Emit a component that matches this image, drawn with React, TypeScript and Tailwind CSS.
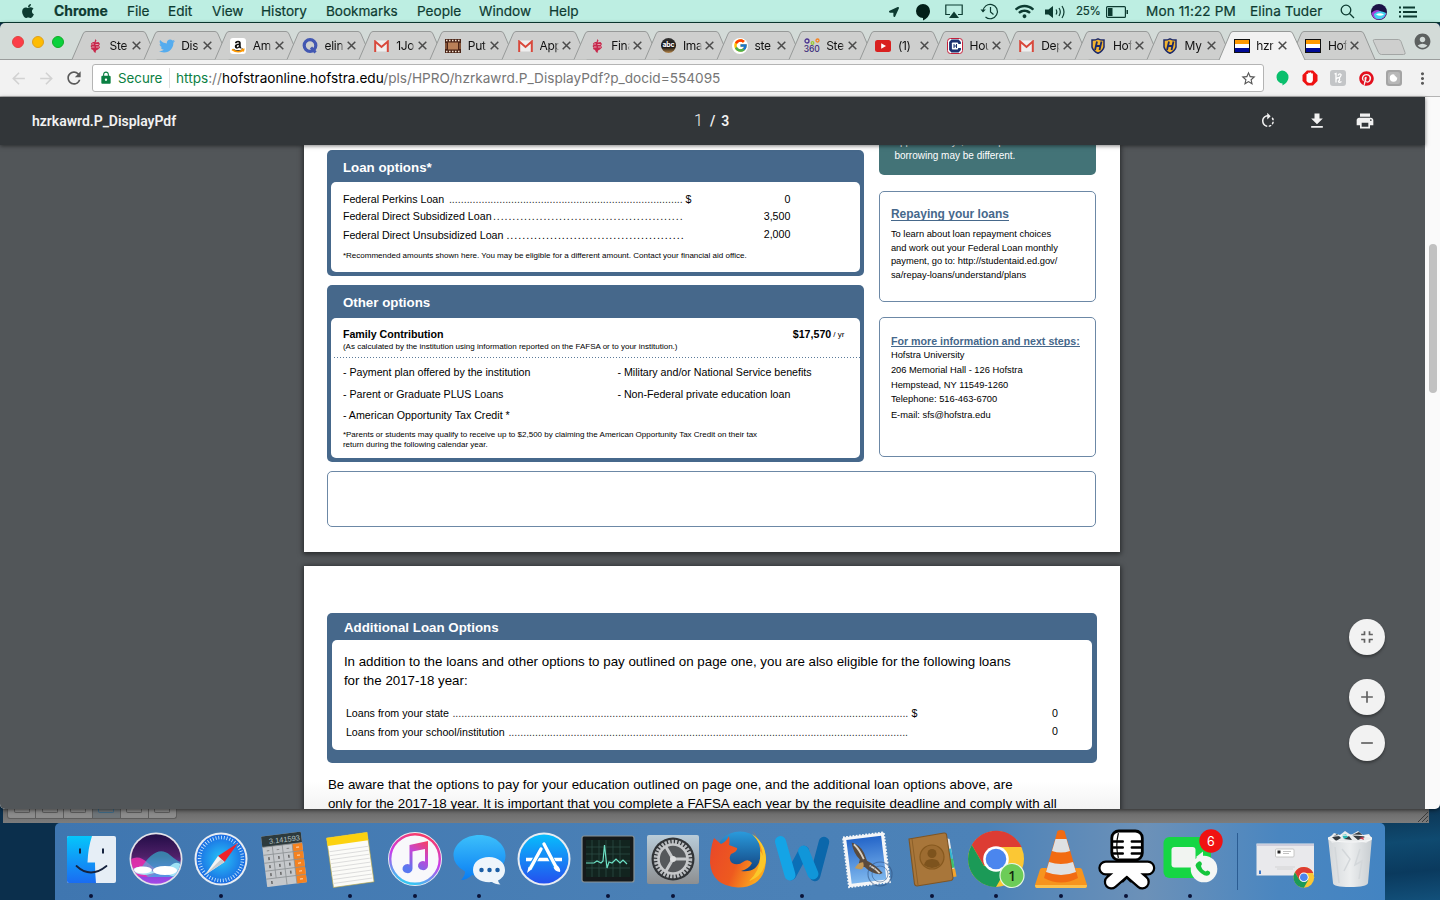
import type { ReactNode } from "react";
import { FaAmazon, FaApple, FaLocationArrow, FaPinterest, FaTwitter, FaWifi } from "react-icons/fa";
import { FcGoogle } from "react-icons/fc";
import {
  MdAccountCircle,
  MdAdd,
  MdArrowBack,
  MdArrowForward,
  MdFileDownload,
  MdFullscreenExit,
  MdLock,
  MdMoreVert,
  MdPrint,
  MdRefresh,
  MdRemove,
  MdRotateRight,
  MdStarBorder,
} from "react-icons/md";

/* ---------- menu bar ---------- */

function MenuBar() {
  return (
    <div className="flex h-[23px] shrink-0 items-center border-b border-[#0c3f35] bg-[#bdeee2] pt-px text-[13.6px] leading-none text-[#0d3b31] [-webkit-text-stroke:0.2px_#0d3b31]">
      <span className="flex w-[54px] pl-5">
        <FaApple size={16} className="-mt-0.5" />
      </span>
      <span className="w-[73px] text-[13.9px] font-bold">Chrome</span>
      <span className="w-[41px]">File</span>
      <span className="w-[44px]">Edit</span>
      <span className="w-[49px]">View</span>
      <span className="w-[65px]">History</span>
      <span className="w-[91px] tracking-[-0.05px]">Bookmarks</span>
      <span className="w-[62px]">People</span>
      <span className="w-[70px]">Window</span>
      <span className="grow">Help</span>
      <span className="flex w-[28px] justify-center">
        <FaLocationArrow size={10} />
      </span>
      <span className="flex w-[30px] justify-center">
        <svg width="16" height="18" viewBox="0 0 16 18" fill="#032019">
          <path d="M8 1a7 7 0 0 1 7 7c0 4.500-3.500 8-7 9.500V15A7 7 0 0 1 8 1z" />
        </svg>
      </span>
      <span className="flex w-[32px] justify-center">
        <svg width="18" height="15" viewBox="0 0 18 15">
          <path d="M5 10.500H.8V1h16.400v9.500H13" fill="none" stroke="#0d3b31" strokeWidth="1.200" />
          <path d="M9 7.500l5 6.500H4z" fill="#0d3b31" />
        </svg>
      </span>
      <span className="flex w-[38px] justify-center">
        <svg width="19" height="17" viewBox="0 0 19 17" fill="none" stroke="#0d3b31" strokeWidth="1.200">
          <path d="M3 8.500a7.200 7.200 0 1 1 2.500 5.500" />
          <path d="M10.500 4v5l3 2.500" />
          <path d="M.5 6.500L3 9.500l2.800-3z" fill="#0d3b31" stroke="none" />
        </svg>
      </span>
      <span className="flex w-[32px] justify-center">
        <FaWifi size={19} />
      </span>
      <span className="flex w-[30px] justify-center">
        <svg width="21" height="14" viewBox="0 0 21 14" fill="none" stroke="#0d3b31" strokeWidth="1.200">
          <path d="M0 4.500h3.500L8 1v12L3.500 9.500H0z" fill="#0d3b31" stroke="none" />
          <path d="M11 4.500q1.600 2.500 0 5M14 3q2.600 4 0 8M17 1q4 6 0 12" />
        </svg>
      </span>
      <span className="w-[33px] pl-[6px] text-[11.500px] tracking-[-0.3px]">25%</span>
      <span className="flex w-[28px] justify-center">
        <svg width="23" height="12" viewBox="0 0 23 12">
          <rect x=".6" y=".6" width="18.800" height="10.800" rx="1" fill="none" stroke="#0d3b31" strokeWidth="1.200" />
          <rect x="2" y="2" width="4.500" height="8" fill="#0d3b31" />
          <path d="M20.500 4h1.500v4h-1.500z" fill="#0d3b31" />
        </svg>
      </span>
      <span className="w-[119px] whitespace-nowrap pl-[15px] tracking-[0.1px]">Mon 11:22 PM</span>
      <span className="w-[80px] whitespace-nowrap tracking-[0.1px]">Elina Tuder</span>
      <span className="flex w-[34px] justify-center">
        <svg width="15" height="15" viewBox="0 0 15 15" fill="none" stroke="#0d3b31" strokeWidth="1.300">
          <circle cx="6" cy="6" r="4.800" />
          <path d="M9.500 9.500L14 14" />
        </svg>
      </span>
      <span className="flex w-[30px] justify-center">
        <svg width="16" height="16" viewBox="0 0 16 16">
          <circle cx="8" cy="8" r="8" fill="#1b1246" />
          <path d="M.5 9Q5 4 9 7t6.500 2Q14 15 8 15.500T.5 9z" fill="#a03fd8" />
          <path d="M3 10q5-5 12-1-2 6-7 6t-5-5z" fill="#3fd5ee" />
          <path d="M5 10.500q4-2.500 8 0-4 2.500-8 0z" fill="#fff" />
        </svg>
      </span>
      <span className="mr-[18px] flex w-[28px] justify-center">
        <svg width="18" height="12" viewBox="0 0 18 12" stroke="#0d3b31" strokeWidth="1.800">
          <path d="M4 1.500h12M4 6h14M4 10.500h14M0 1.500h2M0 6h2M0 10.500h2" />
        </svg>
      </span>
    </div>
  );
}

/* ---------- tab favicons ---------- */

function CrestIcon() {
  return (
    <svg width="16" height="16" viewBox="0 0 16 16">
      <path d="M8.500 1l1 1.500L8.500 4.500l3-.5 1.500 2-1 1.500 1 2-2 2-2 1L8.500 15 7 14l-1-2-2-1 .5-1.500L3.500 8l1-1-.5-1.500 2-1.500h1.500z" fill="#c8284c" />
      <path d="M5 6h2M8.500 6.500h3M5 9h2.500M9 9h3" stroke="#e9c3cc" strokeWidth=".8" />
    </svg>
  );
}

function GmailIcon() {
  return (
    <svg width="15" height="12" viewBox="0 0 15 12">
      <rect x="1" y=".5" width="13" height="11" fill="#eee" />
      <path d="M1.200 12V1.500L7.500 7l6.300-5.500V12" fill="none" stroke="#d9483b" strokeWidth="2" />
    </svg>
  );
}

function ShieldIcon() {
  return (
    <svg width="14" height="16" viewBox="0 0 14 16">
      <path d="M1 2q3 .3 6-1.200Q10 2.300 13 2v7q-1 4-6 6.300Q2 13 1 9z" fill="#f2b430" stroke="#1c2a6b" strokeWidth="1.500" />
      <path d="M6 3.500L4 12M10.500 3.500L8.500 12M4.500 8H10" stroke="#1c2a6b" strokeWidth="1.800" />
    </svg>
  );
}

function FlagIcon() {
  return (
    <svg width="16" height="14" viewBox="0 0 16 14">
      <rect width="16" height="14" fill="#111" />
      <path d="M1 1h14v4H1z" fill="#f90" />
      <path d="M1 5h14v4H1z" fill="#fff" />
      <path d="M1 9h14v4H1z" fill="#000a96" />
    </svg>
  );
}

function AmazonIcon() {
  return (
    <span className="relative flex size-4 items-center justify-center rounded-[3px] bg-white">
      <FaAmazon size={12} color="#111" />
      <svg className="absolute left-0 top-0" width="16" height="16" viewBox="0 0 16 16">
        <path d="M2 11.500q5.500 4 11 .8M11.500 11.500l2.200-.2-.5 2.200" fill="none" stroke="#f90" strokeWidth="1.600" />
      </svg>
    </span>
  );
}

function QIcon() {
  return (
    <svg width="16" height="16" viewBox="0 0 16 16" fill="none" stroke="#4257b2">
      <circle cx="8" cy="7.500" r="5.800" strokeWidth="3.200" />
      <path d="M9 9.500l4.500 5" strokeWidth="3" />
    </svg>
  );
}

function FilmIcon() {
  return (
    <svg width="16" height="14" viewBox="0 0 16 14">
      <rect width="16" height="14" fill="#4a2417" />
      <rect x="3" y="3.500" width="10" height="7" fill="#b98058" />
      <path d="M1 1.500h14M1 12.500h14" stroke="#f3e3d3" strokeWidth="1.300" strokeDasharray="1.500 1.500" />
      <path d="M1 4v6M15 4v6" stroke="#b98058" />
    </svg>
  );
}

function AbcIcon() {
  return (
    <span className="flex size-[15px] items-center justify-center rounded-full bg-[linear-gradient(#333,#111_60%,#b9884a)] pb-[2px] text-[7px] font-bold leading-none tracking-[-0.3px] text-white">
      abc
    </span>
  );
}

function GoogleIcon() {
  return (
    <span className="flex size-4 items-center justify-center rounded-full bg-white">
      <FcGoogle size={15} />
    </span>
  );
}

function Icon360() {
  return (
    <span className="flex w-4 flex-col items-center">
      <svg width="16" height="7" viewBox="0 0 16 7" fill="none" strokeWidth="1.300">
        <circle cx="3" cy="3" r="2" stroke="#4a3190" />
        <circle cx="8.500" cy="5" r="1.300" stroke="#9ccc3c" />
        <circle cx="13.500" cy="2.500" r="1.500" stroke="#f58220" />
      </svg>
      <span className="text-[8.500px] font-medium leading-[9px] text-[#3a2a7a]">360</span>
    </span>
  );
}

function YoutubeIcon() {
  return (
    <svg width="16" height="12" viewBox="0 0 16 12">
      <rect width="16" height="12" rx="2.500" fill="#d9201f" />
      <path d="M6.200 3.200v5.600L11 6z" fill="#fff" />
    </svg>
  );
}

function CIcon() {
  return (
    <svg width="16" height="16" viewBox="0 0 16 16">
      <rect x=".5" y=".5" width="15" height="15" rx="3" fill="#fff" stroke="#c4203a" />
      <path d="M12.500 6V4.500L11 3H5L3.500 4.500v7L5 13h6l1.500-1.500V10" fill="none" stroke="#1f3270" strokeWidth="2.800" />
      <path d="M7 6v4M9.500 6v4M7 8h2.500" stroke="#1f3270" strokeWidth="1" />
    </svg>
  );
}

const tabs: { label: string; icon: ReactNode; active?: boolean }[] = [
  { label: "Ste", icon: <CrestIcon /> },
  { label: "Dis", icon: <FaTwitter size={16} color="#55acee" /> },
  { label: "Am", icon: <AmazonIcon /> },
  { label: "elin", icon: <QIcon /> },
  { label: "1Jo", icon: <GmailIcon /> },
  { label: "Put", icon: <FilmIcon /> },
  { label: "App", icon: <GmailIcon /> },
  { label: "Fina", icon: <CrestIcon /> },
  { label: "Ima", icon: <AbcIcon /> },
  { label: "ste", icon: <GoogleIcon /> },
  { label: "Ste", icon: <Icon360 /> },
  { label: "(1)", icon: <YoutubeIcon /> },
  { label: "Hou", icon: <CIcon /> },
  { label: "Dep", icon: <GmailIcon /> },
  { label: "Hof", icon: <ShieldIcon /> },
  { label: "My", icon: <ShieldIcon /> },
  { label: "hzr", icon: <FlagIcon />, active: true },
  { label: "Hof", icon: <FlagIcon /> },
];

function TabStrip() {
  return (
    <div className="flex h-[37px] shrink-0 items-end border-b border-[#9a9d9c] bg-[#d3dbd8]">
      <div className="flex w-[72px] shrink-0 gap-2 self-start pl-3 pt-[13px]">
        <span className="size-3 rounded-full border border-[#e0443e] bg-[#fc3d48]" />
        <span className="size-3 rounded-full border border-[#dfa01c] bg-[#fdbc02]" />
        <span className="size-3 rounded-full border border-[#12ac28] bg-[#0ad13c]" />
      </div>
      {tabs.map((t, i) => (
        <div key={i} className={`relative flex h-[28px] w-[71.68px] shrink-0 items-center ${t.active ? "z-10 -mb-px h-[29px] pb-px" : ""}`}>
          <svg className="absolute left-0 top-0 overflow-visible" width="86" height={t.active ? 29 : 28}>
            <path
              d={t.active ? "M0 29L11 3Q12 .5 14 .5H71Q73 .5 74 3L86 29" : "M0 28.500L11 3Q12 .5 14 .5H71Q73 .5 74 3L85 28.500"}
              fill={t.active ? "#f2f2f2" : "#cecfce"}
              stroke="#979a99"
            />
          </svg>
          <span className="relative ml-[15px] flex w-4 justify-center pt-px">{t.icon}</span>
          <span className="relative ml-[6.500px] w-[19px] overflow-hidden whitespace-nowrap pt-px text-[12px] leading-4 tracking-[-0.3px] text-[#111] [mask-image:linear-gradient(90deg,#000_80%,transparent)]">
            {t.label}
          </span>
          <svg className="relative ml-[3px] mt-px" width="9" height="9" viewBox="0 0 9 9" stroke="#4b4b4b" strokeWidth="1.500">
            <path d="M.7.7l7.600 7.600M8.300.7L.7 8.300" />
          </svg>
        </div>
      ))}
      <svg className="mb-[4px] ml-[10px]" width="34" height="16" viewBox="0 0 34 16">
        <path d="M2.500.5h24q1.500 0 2.500 2l4 11q.8 2-1.500 2h-22q-2 0-3-2l-5-11q-1-2 1-2z" fill="#cecfce" stroke="#a3a6a5" />
      </svg>
      <MdAccountCircle className="mb-[8px] ml-[7px]" size={19} color="#5d6160" />
    </div>
  );
}

/* ---------- address bar ---------- */

function AddressBar() {
  return (
    <div className="flex h-[37px] shrink-0 items-center border-b border-[#b4b4b4] bg-[#f2f2f2]">
      <div className="flex w-[92px] shrink-0 items-center pl-[9px]">
        <MdArrowBack size={19} color="#d2d2d2" />
        <MdArrowForward className="ml-[9px]" size={19} color="#d2d2d2" />
        <MdRefresh className="ml-[8px]" size={20} color="#5a5a5a" />
      </div>
      <div className="flex h-[28px] w-[1172px] shrink-0 items-center rounded-[3px] border border-[#b4b4b4] bg-white">
        <MdLock className="ml-[6px]" size={14} color="#0b8043" />
        <span className="ml-[5px] w-[45px] text-[13.300px] leading-4 text-[#0b8043]">Secure</span>
        <span className="ml-[6px] mr-[6px] h-5 w-px bg-[#dedede]" />
        <span className="whitespace-nowrap text-[13.640px] leading-4 text-[#767676]">
          <span className="text-[#0b8043]">https</span>://<span className="text-black">hofstraonline.hofstra.edu</span>
          /pls/HPRO/hzrkawrd.P_DisplayPdf?p_docid=554095
        </span>
        <MdStarBorder className="ml-auto mr-[6px]" size={17} color="#5a5a5a" />
      </div>
      <div className="ml-1 flex shrink-0">
        <span className="flex w-7 items-center justify-center">
          <svg width="14" height="16" viewBox="0 0 14 16">
            <path d="M7 .5a6.500 6.500 0 0 1 6.500 6.500c0 4-3 7-6 8.500v-2.100A6.500 6.500 0 0 1 7 .5z" fill="#0abf6d" />
          </svg>
        </span>
        <span className="flex w-7 items-center justify-center">
          <svg width="16" height="16" viewBox="0 0 16 16">
            <path d="M5 .5h6l4.500 4.500v6L11 15.500H5L.5 11V5z" fill="#ee1111" />
            <path d="M4.500 8V4.500a.8.8 0 0 1 1.600 0V3.300a.8.800 0 0 1 1.600 0V3a.8.8 0 0 1 1.600 0v1a.8.8 0 0 1 1.600 0v6.500q-.5 2.500-3 2.500T4.500 11z" fill="#fff" />
          </svg>
        </span>
        <span className="flex w-7 items-center justify-center">
          <span className="flex size-4 items-center justify-center rounded-[3px] bg-[#c3c5c7]">
            <svg width="10" height="12" viewBox="0 0 10 12" fill="none" stroke="#fff" strokeWidth="1.300">
              <path d="M1.500 2L3 1.500v9M3 7.500Q4.500 5 6 6t-.5 3.500q.5 1.800 3 0M5 3.500Q6 1.500 7.500 2T7 5l-1 1" />
            </svg>
          </span>
        </span>
        <span className="flex w-7 items-center justify-center">
          <FaPinterest size={15} color="#e3101e" />
        </span>
        <span className="flex w-7 items-center justify-center">
          <svg width="16" height="16" viewBox="0 0 16 16">
            <rect width="16" height="16" rx="3" fill="#a4a4a4" />
            <rect x="2" y="2" width="12" height="12" rx="2" fill="#b8b8b8" />
            <circle cx="7.500" cy="8" r="3.700" fill="#fff" />
            <path d="M7.500 4.300h3.700V8z" fill="#b8b8b8" />
          </svg>
        </span>
        <span className="flex w-7 items-center justify-center">
          <MdMoreVert size={19} color="#5a5a5a" />
        </span>
      </div>
    </div>
  );
}

/* ---------- PDF document ---------- */

function Line({ className, children }: { className: string; children: ReactNode }) {
  return <div className={`flex items-center whitespace-nowrap leading-none ${className}`}>{children}</div>;
}

function Leader({ count, className }: { count: number; className: string }) {
  return <span className={`whitespace-nowrap ${className}`}>{".".repeat(count)}</span>;
}

function LoanCard() {
  return (
    <section className="h-[126px] rounded-[5px] bg-[#46688b] px-[4px]">
      <Line className="h-[32px] pl-[11.500px] pt-[3px] text-[13.330px] font-bold text-white">Loan options*</Line>
      <div className="h-[90px] rounded-[5px] bg-white pl-[11.500px] pt-[9px] text-[10.670px]">
        <Line className="h-[17px]">
          <span className="w-[106px]">Federal Perkins Loan</span>
          <Leader count={79} className="w-[235px] text-[#333]" />
          <span className="ml-[1.500px]">$</span>
          <span className="ml-auto mr-[70px]">0</span>
        </Line>
        <Line className="h-[17px]">
          <span className="w-[150px]">Federal Direct Subsidized Loan</span>
          <Leader count={49} className="w-[191px] tracking-[0.93px] text-[#222]" />
          <span className="ml-auto mr-[70px]">3,500</span>
        </Line>
        <Line className="h-[21px]">
          <span className="w-[163.500px]">Federal Direct Unsubsidized Loan</span>
          <Leader count={45} className="w-[179px] tracking-[1px]" />
          <span className="ml-auto mr-[70px] pb-[2px]">2,000</span>
        </Line>
        <Line className="h-[21px] text-[8.030px]">
          *Recommended amounts shown here. You may be eligible for a different amount. Contact your financial aid office.
        </Line>
      </div>
    </section>
  );
}

function OtherOptionsCard() {
  return (
    <section className="mt-[9px] h-[177px] rounded-[5px] bg-[#46688b] px-[4px]">
      <Line className="h-[33px] pl-[11.500px] pt-[3px] text-[13.330px] font-bold text-white">Other options</Line>
      <div className="h-[140px] rounded-[5px] bg-white pt-[8px] text-[10.670px]">
        <Line className="h-[17px] pl-[11.500px] font-bold">
          Family Contribution
          <span className="ml-auto">$17,570</span>
          <span className="ml-[2px] mr-[16px] text-[8px] font-normal">/ yr</span>
        </Line>
        <Line className="h-[9px] pl-[11.500px] text-[8.030px]">
          (As calculated by the institution using information reported on the FAFSA or to your institution.)
        </Line>
        <div className="ml-[3px] mt-[5px] h-px bg-[repeating-linear-gradient(90deg,#5b7a99_0_1px,transparent_1px_3px)]" />
        <div className="flex pl-[11.500px]">
          <div className="w-[274.500px]">
            <Line className="h-[29px]">- Payment plan offered by the institution</Line>
            <Line className="h-[15px]">- Parent or Graduate PLUS Loans</Line>
            <Line className="h-[27px]">- American Opportunity Tax Credit *</Line>
          </div>
          <div>
            <Line className="h-[29px]">- Military and/or National Service benefits</Line>
            <Line className="h-[15px]">- Non-Federal private education loan</Line>
          </div>
        </div>
        <Line className="h-[12px] pl-[11.500px] text-[8.030px]">
          *Parents or students may qualify to receive up to $2,500 by claiming the American Opportunity Tax Credit on their tax
        </Line>
        <Line className="h-[9px] pl-[11.500px] text-[8.030px]">return during the following calendar year.</Line>
      </div>
    </section>
  );
}

function PageOne() {
  return (
    <article className="h-[407px] w-[816px] shrink-0 bg-white pl-[23.400px] text-black shadow-[0_1px_5px_1px_rgba(0,0,0,0.55)]">
      <div className="flex">
        <div className="w-[537px] pt-[5px]">
          <LoanCard />
          <OtherOptionsCard />
        </div>
        <div className="ml-[15px] w-[217px]">
          <div className="h-[30px] overflow-hidden rounded-b-[5px] bg-[#437377] pl-[15px] text-[10px] text-white">
            <Line className="-mt-[10px] h-[13px]">approximately $264.94 per month. Your</Line>
            <Line className="mt-px h-[13px]">borrowing may be different.</Line>
          </div>
          <div className="mt-[16px] h-[111px] rounded-[5px] border border-[#6c88a6] pl-[10.500px] pt-[12px] text-[9.330px]">
            <Line className="h-[21px] text-[12px] font-bold text-[#46688b]">
              <span className="border-b border-[#46688b]">Repaying your loans</span>
            </Line>
            <Line className="mt-px h-[18px]">To learn about loan repayment choices</Line>
            <Line className="h-[9px]">and work out your Federal Loan monthly</Line>
            <Line className="h-[17px]">payment, go to: http://studentaid.ed.gov/</Line>
            <Line className="h-[11px]">sa/repay-loans/understand/plans</Line>
          </div>
          <div className="mt-[15px] h-[140px] rounded-[5px] border border-[#6c88a6] pl-[10.500px] pt-[16px] text-[9.330px]">
            <Line className="h-[15px] text-[10.670px] font-bold text-[#46688b]">
              <span className="border-b border-[#46688b]">For more information and next steps:</span>
            </Line>
            <Line className="h-[14px]">Hofstra University</Line>
            <Line className="h-[16px]">206 Memorial Hall - 126 Hofstra</Line>
            <Line className="h-[13px]">Hempstead, NY 11549-1260</Line>
            <Line className="h-[16px]">Telephone: 516-463-6700</Line>
            <Line className="h-[15px]">E-mail: sfs@hofstra.edu</Line>
          </div>
        </div>
      </div>
      <div className="mt-[9px] h-[56px] w-[769px] rounded-[5px] border border-[#6c88a6]" />
    </article>
  );
}

function PageTwo() {
  return (
    <article className="mt-[14px] h-[300px] w-[816px] shrink-0 bg-white bg-[linear-gradient(#fff_215px,#f3f3f3_243px)] pl-[23.400px] pt-[47px] text-black shadow-[0_1px_5px_1px_rgba(0,0,0,0.55)]">
      <section className="h-[149.500px] w-[769.500px] rounded-[5px] bg-[#46688b] px-[5px]">
        <Line className="h-[27px] pl-[11.500px] pt-[2px] text-[13.330px] font-bold text-white">Additional Loan Options</Line>
        <div className="h-[109.500px] rounded-[5px] bg-white pl-[11.500px] pt-[11.500px] text-[13.330px]">
          <Line className="h-[20px]">
            In addition to the loans and other options to pay outlined on page one, you are also eligible for the following loans
          </Line>
          <Line className="h-[19px]">for the 2017-18 year:</Line>
          <Line className="mt-[14px] h-[18px] pl-[2px] text-[10.670px]">
            <span className="w-[106.500px]">Loans from your state</span>
            <Leader count={154} className="w-[458px] text-[#333]" />
            <span className="ml-px">$</span>
            <span className="ml-auto mr-[34px]">0</span>
          </Line>
          <Line className="h-[19px] pl-[2px] text-[10.670px]">
            <span className="w-[162.500px]">Loans from your school/institution</span>
            <Leader count={135} className="w-[402px] text-[#333]" />
            <span className="ml-auto mr-[34px] pb-[2px]">0</span>
          </Line>
        </div>
      </section>
      <div className="pl-[0.500px] pt-[12px] text-[13.330px]">
        <Line className="h-[20px]">
          Be aware that the options to pay for your education outlined on page one, and the additional loan options above, are
        </Line>
        <Line className="h-[19px] tracking-[0.016px]">
          only for the 2017-18 year. It is important that you complete a FAFSA each year by the requisite deadline and comply with all
        </Line>
      </div>
    </article>
  );
}

function RoundButton({ className, children }: { className: string; children: ReactNode }) {
  return (
    <button className={`flex size-9 items-center justify-center rounded-full bg-[#f2f2f2] text-[#616161] shadow-[0_2px_3px_rgba(0,0,0,0.35)] ${className}`}>
      {children}
    </button>
  );
}

function PdfViewer() {
  return (
    <div className="flex h-[712px] shrink-0 bg-[#fafafa]">
      <div className="relative flex w-[1425px] flex-col bg-[#525659]">
        <header className="z-10 flex h-12 shrink-0 items-center bg-[#323639] font-['Roboto',sans-serif] text-sm leading-none text-[#f1f1f1] shadow-[0_1px_4px_rgba(0,0,0,0.5)]">
          <span className="w-[662px] pl-8 font-semibold tracking-[-0.03px]">hzrkawrd.P_DisplayPdf</span>
          <span className="w-[41px] pb-px pl-[32px] text-base font-light">1</span>
          <span className="w-[553px] pl-[7px] font-semibold tracking-[1.200px]">/ 3</span>
          <MdRotateRight size={18} className="ml-[3px]" />
          <MdFileDownload size={20} className="ml-[30px]" />
          <MdPrint size={20} className="ml-[28px]" />
        </header>
        <main className="flex grow flex-col overflow-hidden pl-[304px] font-['Liberation_Sans',sans-serif]">
          <PageOne />
          <PageTwo />
        </main>
        <div className="absolute left-[1349px] top-[522px] flex flex-col">
          <RoundButton className="">
            <MdFullscreenExit size={20} />
          </RoundButton>
          <RoundButton className="mt-[24px]">
            <MdAdd size={20} />
          </RoundButton>
          <RoundButton className="mt-[10px]">
            <MdRemove size={20} />
          </RoundButton>
        </div>
      </div>
      <div className="ml-[4px] mt-[147px] h-[149px] w-[8px] rounded-full bg-[#c1c1c1]" />
    </div>
  );
}

/* ---------- dock ---------- */

function DockSvg({ children }: { children: ReactNode }) {
  return (
    <svg className="overflow-visible" width="56" height="56" viewBox="0 0 56 56">
      {children}
    </svg>
  );
}

function Finder() {
  return (
    <DockSvg>
      <rect x="4" y="5" width="49" height="47" rx="2" fill="#e6eef6" />
      <path d="M6 5h23q-4 12-4.500 26.500h7.500Q32 43 33 52H6q-2 0-2-2V7q0-2 2-2z" fill="url(#finder)" />
      <path d="M17 17.500v5M40 17.500v5" stroke="#15233f" strokeWidth="2" />
      <path d="M13.500 35q14 13 30 0" fill="none" stroke="#15233f" strokeWidth="1.800" strokeLinecap="round" />
    </DockSvg>
  );
}

function Siri() {
  return (
    <DockSvg>
      <circle cx="28" cy="28" r="26.500" fill="#e3e3ea" />
      <clipPath id="siriClip">
        <circle cx="28" cy="28" r="24.800" />
      </clipPath>
      <g clipPath="url(#siriClip)">
        <rect width="56" height="56" fill="url(#siriBg)" />
        <path d="M0 30Q10 22 20 32T38 38L20 46 0 44z" fill="#f02fae" opacity=".85" />
        <path d="M12 39Q28 12 42 24T56 28V46H20z" fill="#2fd3e6" opacity=".55" />
        <path d="M3 39q10-7 19 0t19-3 15 3q-6 9-15 5t-19-1-19-4z" fill="#a9ecfa" opacity=".9" />
        <ellipse cx="15" cy="39" rx="9" ry="3.500" fill="#fff" />
        <ellipse cx="37" cy="39.500" rx="12" ry="4.500" fill="#fff" />
      </g>
    </DockSvg>
  );
}

function Safari() {
  return (
    <DockSvg>
      <circle cx="28" cy="28" r="26.500" fill="#e9edf2" />
      <circle cx="28" cy="28" r="24.500" fill="url(#safari)" />
      <circle cx="28" cy="28" r="21.500" fill="none" stroke="#d7efff" strokeWidth="3.500" strokeDasharray=".8 2" />
      <path d="M45 12L31.500 31 25 25z" fill="#f0222b" />
      <path d="M12 44l13-19 6.500 6z" fill="#f3f3f3" />
      <path d="M12 44l19.500-13-3.200-3z" fill="#c9ccd0" />
    </DockSvg>
  );
}

function Calculator() {
  return (
    <DockSvg>
      <g transform="translate(4 5.500) rotate(-7)">
        <rect width="40" height="51" rx="1" fill="#c5c8cb" />
        <rect width="40" height="11" rx="1" fill="#2d3a3d" />
        <rect x="30" y="11" width="10" height="40" fill="#f58220" />
        <path d="M0 11h40M0 19h40M0 27h40M0 35h40M0 43h40M10 11v32M20 11v40M30 11v40" stroke="#8d9194" strokeWidth=".8" />
        <text x="38.500" y="8.500" fontSize="7.500" textAnchor="end" fill="#b5c3c4" fontFamily="Liberation Sans, sans-serif">
          3.141593
        </text>
        <path d="M4.500 23h1.500M14.500 23h1.500M24.500 23h1.500M4.500 31h1.500M14.500 31h1.500M24.500 31h1.500M4.500 39h1.500M14.500 39h1.500M24.500 39h1.500M4.500 47h1.500" stroke="#666" strokeWidth="3" />
        <path d="M4 15h2.500M14 15h2.500M24 15h2.500" stroke="#888" />
        <path d="M33.500 15h3M33.500 23h3M33.500 31h3M33.500 39h3M33.500 47h3" stroke="#ffe0c0" />
      </g>
    </DockSvg>
  );
}

function Notes() {
  return (
    <DockSvg>
      <g transform="translate(4.500 7) rotate(-8)">
        <rect width="41" height="50" fill="#fbfbf8" stroke="#b9a741" strokeWidth=".6" />
        <rect width="41" height="8" fill="#fcd20f" />
        <path d="M1 14h39M1 18h39M1 22h39M1 26h39M1 30h39M1 34h39M1 38h39M1 42h39M1 46h39" stroke="#d7d7d7" strokeWidth=".8" />
      </g>
    </DockSvg>
  );
}

function Itunes() {
  return (
    <DockSvg>
      <circle cx="28" cy="28" r="27" fill="#eceef3" />
      <circle cx="28" cy="28" r="24.800" fill="#f8f8fb" stroke="url(#itunes)" strokeWidth="2.400" />
      <path d="M22.500 14l18.500-4v24.500a5 4.500 0 1 1-3-4V18l-12.500 2.500v17a5 4.500 0 1 1-3-4z" fill="url(#note)" />
    </DockSvg>
  );
}

function Messages() {
  return (
    <DockSvg>
      <path d="M28.500 4C43 4 54.500 13 54.500 24.500S43 45 28.500 45q-4 0-7.500-1-5 5-11 5 4-4 4-8.500Q2.500 34 2.500 24.500C2.500 13 14 4 28.500 4z" fill="url(#msg)" />
      <path d="M38 26c9 0 16 5.500 16 13 0 5-3 8.500-7 10.500.5 2 1.500 3 2.500 4-4 0-6.500-1-8.500-2.500-11 1-19-4-19-12S29 26 38 26z" fill="#eef5fb" />
      <path d="M30.500 39h.01M38.500 39h.01M46.500 39h.01" stroke="#1b5ea5" strokeWidth="4.500" strokeLinecap="round" />
    </DockSvg>
  );
}

function AppStore() {
  return (
    <DockSvg>
      <circle cx="28" cy="28" r="26.500" fill="#e9edf2" />
      <circle cx="28" cy="28" r="24.500" fill="url(#appstore)" />
      <path d="M10 28.500h36" stroke="#fff" strokeWidth="3.400" />
      <path d="M25 18L14 37.500M28 14L39.500 36" stroke="#148ef5" strokeWidth="5.500" />
      <path d="M25 18L14.500 37M28 13L39.500 35" stroke="#fff" strokeWidth="3.400" strokeLinecap="round" />
      <path d="M12.500 36l3.500 2-5 4zM37.500 36.500l4-2q3.500 3.500 2.500 6.500-5-.3-6.500-4.500z" fill="#fff" />
    </DockSvg>
  );
}

function ActivityMonitor() {
  return (
    <DockSvg>
      <rect x="2" y="5" width="52" height="46" rx="2" fill="#15191a" stroke="#8b9396" strokeWidth="1.200" />
      <g transform="translate(0 1)">
        <rect x="6" y="8" width="44" height="37" fill="#12241f" />
        <path d="M12 8v37M19 8v37M26 8v37M33 8v37M40 8v37M6 15h44M6 22h44M6 29h44M6 36h44" stroke="#2b4b44" strokeWidth=".8" />
        <path d="M6 31h8l3-2 4 2 2-2 1.500-16L27 36l2-6 3 1 4-4 4 4 3-3 4 4" fill="none" stroke="#6ce0c4" strokeWidth="1.200" />
      </g>
    </DockSvg>
  );
}

function SystemPreferences() {
  return (
    <DockSvg>
      <rect x="2" y="4" width="52" height="49" rx="2" fill="url(#metal)" />
      <circle cx="28" cy="28" r="21.500" fill="#303336" />
      <circle cx="28" cy="28" r="17" fill="none" stroke="#b9bcbf" strokeWidth="4.500" strokeDasharray="2.200 1.200" />
      <circle cx="28" cy="28" r="14.500" fill="#55585b" stroke="#c6c8ca" strokeWidth="2.600" />
      <path d="M28 28h14M28 28l-7-12M28 28l-7 12" stroke="#c6c8ca" strokeWidth="3" />
      <circle cx="28" cy="28" r="3" fill="#dcdedf" />
    </DockSvg>
  );
}

function Firefox() {
  return (
    <DockSvg>
      <circle cx="30" cy="26" r="25.500" fill="url(#ffglobe)" />
      <path d="M46 6q9 9 10 21 0 29-28 29.500Q2 55 0 32q0-14 4-25l7 6q6-3 8-8 1 6 0 9l8 3q1 3-6 6-3 5 1 9 6 3 11-1t9 1q-3 6-11 8 16 2 19-12 2-15-7-28z" fill="url(#fffox)" />
      <path d="M42 3q10 10 11 22-1-3-3-5 2 18-11 30 15-5 17-21 0-17-14-26z" fill="#fbc82a" />
    </DockSvg>
  );
}

function Word() {
  return (
    <DockSvg>
      <path d="M50 11L41 45" fill="none" stroke="#0b67ab" strokeWidth="10.500" strokeLinecap="round" />
      <path d="M30 20L17 44" fill="none" stroke="#0b6fb6" strokeWidth="10.500" strokeLinecap="round" />
      <path d="M6.500 10.500L16 44" fill="none" stroke="#14a4e6" strokeWidth="11" strokeLinecap="round" />
      <path d="M29.500 20L39 43" fill="none" stroke="#1096d9" strokeWidth="11" strokeLinecap="round" />
    </DockSvg>
  );
}

function Mail() {
  return (
    <DockSvg>
      <g transform="translate(4 6.500) rotate(-7)">
        <rect width="41" height="50" fill="#f4f6f8" stroke="#f4f6f8" strokeWidth="2" strokeDasharray="1.800 1.400" />
        <rect x="3" y="3" width="35" height="44" fill="url(#sky)" />
        <path d="M8 6q8 3 11 12l2 8q9 6 14 14l-3 1q-9-2-14-9l-5-1q-1-4 1-7Q8 16 8 6z" fill="#5a4a3c" />
        <path d="M10 8q5 6 8 16M23 31q6 4 9 9" stroke="#d8cfc2" strokeWidth="1.800" fill="none" />
        <path d="M8 32q4-6 9-5 1 6-3 7z" fill="#c49a58" />
      </g>
      <circle cx="41" cy="43" r="12" fill="none" stroke="#2e4f7c" strokeWidth="1.100" opacity=".55" />
      <circle cx="41" cy="43" r="8" fill="none" stroke="#2e4f7c" opacity=".5" />
    </DockSvg>
  );
}

function Contacts() {
  return (
    <DockSvg>
      <path d="M42 7l3.500 1 6 36-3 1z" fill="#e7e7e7" />
      <path d="M43 18l4-.5 2 10-4 1z" fill="#33b7d4" />
      <path d="M44 28l5-.5 1.500 9-5 1z" fill="#3cc06d" />
      <path d="M45 38l6-.5 1.500 8-6 1z" fill="#f4a42b" />
      <path d="M5 8l35-6q2-.3 2.500 1.500L49 47q0 2-2 2.500L13 55q-2 0-2.500-2z" fill="#a8763a" stroke="#7f5524" strokeWidth="1.100" />
      <path d="M8 8l6 46" stroke="#8c6029" />
      <circle cx="28" cy="26" r="12" fill="#9d6c31" stroke="#86591f" strokeWidth="1.200" />
      <circle cx="28" cy="22.500" r="4.500" fill="#7d531d" />
      <path d="M20 34q1-6 8-6t8 6q-8 6-16 0z" fill="#7d531d" />
    </DockSvg>
  );
}

function ChromeBall() {
  return (
    <>
      <circle cx="28" cy="28" r="28" fill="#fbc734" />
      <path d="M3.800 14A28 28 0 0 1 53.600 16H28L16 35z" fill="#dd3c33" />
      <path d="M3.800 14A28 28 0 0 0 28 56L40 35H16z" fill="#1b9a57" />
      <circle cx="28" cy="28" r="12.800" fill="#fff" />
      <circle cx="28" cy="28" r="10.300" fill="#4b86ee" />
    </>
  );
}

function ChromeApp() {
  return (
    <DockSvg>
      <ChromeBall />
      <circle cx="44" cy="44.500" r="12" fill="#6ccc58" stroke="#e6f6e2" strokeWidth="1.200" />
      <text x="44" y="49.500" fontSize="13.500" textAnchor="middle" fill="#12250d" fontFamily="Open Sans, sans-serif" fontWeight="600">
        1
      </text>
    </DockSvg>
  );
}

function Vlc() {
  return (
    <DockSvg>
      <path d="M9 37h38q1.500 0 2 1.500L54 54q0 3-2 3H4q-2 0-2-3l5-15.500Q7.500 37 9 37z" fill="#f7941e" />
      <path d="M2 54h52q0 3-2 3H4q-2 0-2-3z" fill="#fdc04a" />
      <path d="M24.500 0q3.500-2 7 0L45 47q-17 9-34 0z" fill="#f26b12" />
      <path d="M22.500 8h11l3.500 12q-9 3-18 0zM16 31q12 4 24 0l3 10q-15 6-30 0z" fill="#dfe1e3" />
    </DockSvg>
  );
}

function Mic() {
  return (
    <DockSvg>
      <g fill="none" stroke="#000" strokeLinecap="round" strokeLinejoin="round" transform="translate(.8 .5)">
        <path d="M7 36.500H49M28 37L12.500 50.500M28 37l15.500 13.500" strokeWidth="15" />
        <path d="M7 36.500H49M28 37L12.500 50.500M28 37l15.500 13.500" stroke="#fff" strokeWidth="10.500" />
        <path d="M28 46l-4 4M28 46l4 4" strokeWidth="2" />
        <rect x="13" y="-.5" width="30.500" height="29" rx="7" strokeWidth="2.800" fill="#fff" />
        <path d="M14.500 10h9.500M14.500 16h9.500M14.500 22h9.500M33 10h9.500M33 16h9.500M33 22h9.500" strokeWidth="2.400" />
        <path d="M19.500 2q-3 12 0 24" strokeWidth="1.200" />
      </g>
    </DockSvg>
  );
}

function FaceTime() {
  return (
    <DockSvg>
      <rect x="1.500" y="6" width="47.500" height="41" rx="6" fill="#16d644" />
      <rect x="9.500" y="16" width="24" height="20.500" rx="3" fill="#f1f4f1" />
      <path d="M34 26l7-5.500v12z" fill="#f1f4f1" />
      <circle cx="42" cy="38" r="13.300" fill="#f4f6f4" />
      <path d="M36 31q3-2 4 2l-1 2q1 4 4.500 5.500l2-1q4 1 2 4-3 3-8-1t-6-8q0-2 2.500-3.500z" fill="#14c63c" />
      <circle cx="49" cy="10" r="11.700" fill="#f01212" />
      <text x="49" y="14.500" fontSize="12.500" textAnchor="middle" fill="#fff" fontFamily="Inter, sans-serif">
        6
      </text>
    </DockSvg>
  );
}

function MiniWindow() {
  return (
    <DockSvg>
      <rect x="-.5" y="12.500" width="57.500" height="32" fill="#e9e9ec" />
      <path d="M-.5 14h57.500" stroke="#c3c3d6" strokeWidth="1.500" />
      <rect x="18.500" y="18" width="18.500" height="8" rx="1" fill="#fff" stroke="#bbb" strokeWidth=".8" />
      <path d="M20.500 21h3" stroke="#222" strokeWidth="3" />
      <path d="M26 20.500h8M26 22.500h6" stroke="#999" strokeWidth=".6" />
      <path d="M18 36h20M20 38h16" stroke="#ccc" strokeWidth=".7" />
      <path d="M3 39.500v3.500" stroke="#3b78c9" strokeWidth="2" />
      <g transform="translate(36.500 36) scale(.37)">
        <ChromeBall />
      </g>
    </DockSvg>
  );
}

function Trash() {
  return (
    <DockSvg>
      <path d="M6 6h44l-4 46q-1 4-18 4T11 52z" fill="url(#bin)" />
      <path d="M7 7l5-5 6 2 5-4 6 4 7-4 5 4 6-1 3 5-6 4-8-2-9 3-9-3-8 2z" fill="#e9ebec" />
      <path d="M10 6l5-3 4 4-5 3zM30 4l7-3 6 5-7 3zM22 8l5-3 3 4z" fill="#333a40" />
      <path d="M20 4l4-1 2 3-4 2z" fill="#27b9b5" />
      <path d="M37 7l4-1 1 3z" fill="#c93b4d" />
      <path d="M13 16l4 36M20 18l8 10-6 12M38 18l-5 16 7-4-3 18" stroke="#d3d7da" strokeWidth="1.500" fill="none" />
      <ellipse cx="28" cy="7.500" rx="21.500" ry="3.500" fill="none" stroke="#f5f6f7" strokeWidth="1.200" />
    </DockSvg>
  );
}

function DockGradients() {
  return (
    <svg className="absolute" width="0" height="0">
      <defs>
        <linearGradient id="finder" x1="0" y1="0" x2="0" y2="1">
          <stop offset="0" stopColor="#05c6fb" />
          <stop offset="1" stopColor="#1a6cf2" />
        </linearGradient>
        <linearGradient id="siriBg" x1="0" y1="0" x2="0" y2="1">
          <stop offset="0" stopColor="#1c0a42" />
          <stop offset=".45" stopColor="#4e2068" />
          <stop offset=".8" stopColor="#8c45e0" />
          <stop offset="1" stopColor="#b04be8" />
        </linearGradient>
        <radialGradient id="safari">
          <stop offset="0" stopColor="#28c5f8" />
          <stop offset="1" stopColor="#1a6be2" />
        </radialGradient>
        <linearGradient id="itunes" x1=".7" y1="0" x2=".4" y2="1">
          <stop offset="0" stopColor="#fb3b62" />
          <stop offset=".5" stopColor="#c93bea" />
          <stop offset="1" stopColor="#35c8f3" />
        </linearGradient>
        <linearGradient id="note" x1="1" y1="0" x2=".5" y2="1">
          <stop offset="0" stopColor="#fb3f5c" />
          <stop offset=".5" stopColor="#c146d8" />
          <stop offset="1" stopColor="#5a78f0" />
        </linearGradient>
        <linearGradient id="msg" x1="0" y1="0" x2="0" y2="1">
          <stop offset="0" stopColor="#3cc0fb" />
          <stop offset="1" stopColor="#0a7df3" />
        </linearGradient>
        <linearGradient id="appstore" x1="0" y1="0" x2="0" y2="1">
          <stop offset="0" stopColor="#08bdfc" />
          <stop offset="1" stopColor="#2450ee" />
        </linearGradient>
        <linearGradient id="metal" x1="0" y1="0" x2="0" y2="1">
          <stop offset="0" stopColor="#b9ccd9" />
          <stop offset="1" stopColor="#8d8f91" />
        </linearGradient>
        <linearGradient id="ffglobe" x1="0" y1="0" x2="0" y2="1">
          <stop offset="0" stopColor="#2a9bdc" />
          <stop offset="1" stopColor="#0c2a66" />
        </linearGradient>
        <linearGradient id="fffox" x1="0" y1="0" x2="1" y2=".4">
          <stop offset="0" stopColor="#e8452a" />
          <stop offset=".6" stopColor="#ee5a1f" />
          <stop offset="1" stopColor="#fba61d" />
        </linearGradient>
        <linearGradient id="sky" x1="0" y1="0" x2="0" y2="1">
          <stop offset="0" stopColor="#2566c9" />
          <stop offset="1" stopColor="#7fb8ee" />
        </linearGradient>
        <linearGradient id="bin" x1="0" y1="0" x2="1" y2="0">
          <stop offset="0" stopColor="#d3d7da" />
          <stop offset=".5" stopColor="#eceeef" />
          <stop offset="1" stopColor="#c8cdd1" />
        </linearGradient>
      </defs>
    </svg>
  );
}

const apps: { icon: ReactNode; running: boolean }[] = [
  { icon: <Finder />, running: true },
  { icon: <Siri />, running: false },
  { icon: <Safari />, running: true },
  { icon: <Calculator />, running: false },
  { icon: <Notes />, running: true },
  { icon: <Itunes />, running: true },
  { icon: <Messages />, running: true },
  { icon: <AppStore />, running: false },
  { icon: <ActivityMonitor />, running: true },
  { icon: <SystemPreferences />, running: true },
  { icon: <Firefox />, running: false },
  { icon: <Word />, running: true },
  { icon: <Mail />, running: false },
  { icon: <Contacts />, running: true },
  { icon: <ChromeApp />, running: true },
  { icon: <Vlc />, running: true },
  { icon: <Mic />, running: true },
  { icon: <FaceTime />, running: true },
];

function Dock() {
  return (
    <div className="ml-[55px] flex h-[77px] w-[1330px] rounded-t-[5px] bg-[linear-gradient(90deg,#3f76b0,#4a80b6_45%,#4c82b8_70%,#6c91b8_82%,#4a86c0_92%,#4384c2)] pl-[4px]">
      <DockGradients />
      {apps.map((a, i) => (
        <div key={i} className="flex w-[64.650px] shrink-0 flex-col items-center pt-2">
          {a.icon}
          {a.running && <span className="mt-[7px] size-1 rounded-full bg-[#0a1338]" />}
        </div>
      ))}
      <div className="ml-[14px] mt-[10px] h-[57px] w-px bg-[#2b5c92]" />
      <div className="ml-[19px] pt-2">
        <MiniWindow />
      </div>
      <div className="ml-[9px] pt-2">
        <Trash />
      </div>
    </div>
  );
}

/* ---------- window peeking out behind the browser ---------- */

function BackWindowStrip() {
  return (
    <div className="ml-[3px] flex h-[14px] w-[1426px] shrink-0 justify-between bg-[linear-gradient(#686868,#7c7c7c)]">
      <div className="ml-1 flex h-[10px] w-[170px] divide-x divide-[#5d5d5d] rounded-b-[3px] border border-t-0 border-[#5d5d5d] bg-[#8b8b8b]">
        {[0, 1, 2, 3, 4, 5].map((n) => (
          <div key={n} className={`flex grow justify-center ${n === 3 ? "bg-[#6e7478]" : ""}`}>
            <span className={`h-1 w-4 rounded-b-[2px] border border-t-0 ${n === 3 ? "border-[#3f6b88]" : "border-[#5d5d5d]"}`} />
          </div>
        ))}
      </div>
      <svg width="12" height="14" viewBox="0 0 12 14" stroke="#3c3c3c" strokeWidth="1">
        <path d="M1 13L11 3M5 13l6-6M9 13l2-2" />
      </svg>
    </div>
  );
}

export default function App() {
  return (
    <div className="flex h-[900px] w-[1440px] flex-col overflow-hidden bg-[linear-gradient(175deg,#0b2f4c_0_90%,#0f4a70_94%,#0a3a5e_97%,#12507a)] font-['Inter',sans-serif]">
      <MenuBar />
      <div className="z-10 flex h-[786px] shrink-0 flex-col overflow-hidden rounded-[5px] shadow-[0_1px_4px_rgba(0,0,0,0.6)]">
        <TabStrip />
        <AddressBar />
        <PdfViewer />
      </div>
      <BackWindowStrip />
      <Dock />
    </div>
  );
}
